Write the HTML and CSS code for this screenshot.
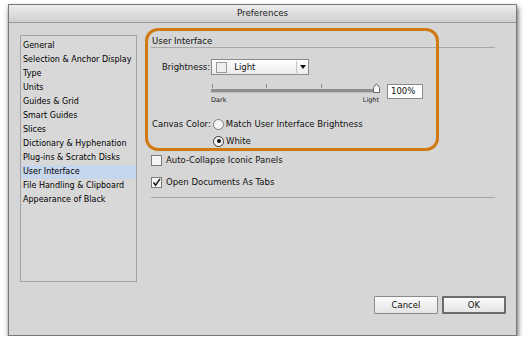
FILE: index.html
```html
<!DOCTYPE html>
<html lang="en">
<head>
    <meta charset="UTF-8">
    <title>Preferences</title>
    <link rel="stylesheet" href="styles.css">
</head>
<body>
    <div class="window">
        <div class="titlebar">Preferences</div>
        <div class="content">
            <ul class="sidebar">
                <li>General</li>
                <li>Selection &amp; Anchor Display</li>
                <li>Type</li>
                <li>Units</li>
                <li>Guides &amp; Grid</li>
                <li>Smart Guides</li>
                <li>Slices</li>
                <li>Dictionary &amp; Hyphenation</li>
                <li>Plug-ins &amp; Scratch Disks</li>
                <li class="selected">User Interface</li>
                <li>File Handling &amp; Clipboard</li>
                <li>Appearance of Black</li>
            </ul>
            <div class="panel">
                <div class="section-title">User Interface</div>

                <div class="row brightness-row">
                    <span class="label">Brightness:</span>
                    <div class="dropdown">
                        <span class="swatch"></span>
                        <span class="dropdown-text">Light</span>
                        <span class="dropdown-arrow">
                            <svg width="6" height="4" viewBox="0 0 6 4"><path d="M0 0 H6 L3 4 Z" fill="#111"/></svg>
                        </span>
                    </div>
                </div>

                <div class="slider-row">
                    <div class="slider">
                        <div class="ticks">
                            <span></span><span></span><span></span><span></span>
                        </div>
                        <div class="track">
                            <svg class="thumb" width="9" height="10" viewBox="0 0 9 10">
                                <path d="M1.5 9.5 V4.5 L4.5 0.8 L7.5 4.5 V9.5 Z" fill="#fafafa" stroke="#666"/>
                            </svg>
                        </div>
                        <div class="slider-labels">
                            <span>Dark</span>
                            <span>Light</span>
                        </div>
                    </div>
                    <div class="percent">100%</div>
                </div>

                <div class="row canvas-row">
                    <span class="label">Canvas Color:</span>
                    <span class="radio"></span>
                    <span>Match User Interface Brightness</span>
                </div>
                <div class="row white-row">
                    <span class="radio checked"></span>
                    <span>White</span>
                </div>

                <div class="row check-row">
                    <span class="checkbox"></span>
                    <span>Auto-Collapse Iconic Panels</span>
                </div>
                <div class="row check-row second">
                    <span class="checkbox">
                        <svg width="9" height="9" viewBox="0 0 9 9"><path d="M1.5 4.5 L3.6 7.2 L8 0.8" fill="none" stroke="#111" stroke-width="1.4"/></svg>
                    </span>
                    <span>Open Documents As Tabs</span>
                </div>

                <div class="divider"></div>

                <div class="buttons">
                    <button class="btn">Cancel</button>
                    <button class="btn default">OK</button>
                </div>
            </div>
        </div>
        <div class="highlight"></div>
    </div>
</body>
</html>
```

FILE: styles.css
```css
body {
    margin: 0;
    background: #fff;
    font-family: "DejaVu Sans", Verdana, sans-serif;
    font-size: 8.5px;
    color: #111;
}
.window {
    position: relative;
    margin: 4px 0 0 8px;
    width: 507px;
    height: 330px;
    border: 1px solid #7a7a7a;
    background: #d6d6d6;
    box-shadow: 1px 3px 5px rgba(0, 0, 0, 0.65);
    display: flex;
    flex-direction: column;
}
.titlebar {
    height: 17px;
    line-height: 17px;
    text-align: center;
    font-size: 8.7px;
    color: #222;
    background: linear-gradient(#ececec, #cfcfcf);
    border-bottom: 1px solid #9a9a9a;
}
.content {
    flex: 1;
    display: flex;
    padding: 12px 10px 21px 11px;
}
.sidebar {
    list-style: none;
    margin: 0;
    padding: 3px 0 0 0;
    width: 115px;
    height: 242px;
    border: 1px solid #a3a3a3;
    background: #d8d8d8;
    font-size: 8px;
    color: #000;
}
.sidebar li {
    height: 14px;
    line-height: 14px;
    padding-left: 2px;
    white-space: nowrap;
}
.sidebar li.selected {
    background: #c6d6ec;
}
.panel {
    flex: 1;
    margin-left: 14px;
    display: flex;
    flex-direction: column;
}
.section-title {
    height: 12px;
    line-height: 12px;
    padding-left: 1px;
    border-bottom: 1px solid #a8a8a8;
    margin-right: 11px;
}
.row {
    display: flex;
    align-items: center;
    white-space: nowrap;
    height: 14px;
}
.label {
    margin-right: 2px;
}
.brightness-row {
    margin-top: 11px;
    height: 16px;
    padding-left: 11px;
}
.brightness-row .label {
    margin-right: 1px;
}
.dropdown {
    width: 96px;
    height: 14px;
    border: 1px solid #8c8c8c;
    background: linear-gradient(#fdfdfd, #ececec);
    display: flex;
    align-items: center;
}
.swatch {
    width: 9px;
    height: 9px;
    border: 1px solid #9a9a9a;
    background: #eee;
    margin-left: 4px;
}
.dropdown-text {
    margin-left: 7px;
    flex: 1;
}
.dropdown-arrow {
    width: 11px;
    height: 12px;
    border-left: 1px solid #c4c4c4;
    display: flex;
    align-items: center;
    justify-content: center;
}
.slider-row {
    display: flex;
    margin-top: 9px;
    padding-left: 60px;
}
.slider {
    width: 168px;
}
.ticks {
    display: flex;
    justify-content: space-between;
    width: 164px;
    height: 4px;
    padding-left: 1px;
}
.ticks span {
    width: 1px;
    height: 4px;
    background: #8a8a8a;
}
.track {
    position: relative;
    margin-top: 1px;
    height: 3px;
    background: #8f8f8f;
    border-bottom: 1px solid #bdbdbd;
    border-radius: 1px;
}
.thumb {
    position: absolute;
    right: -2px;
    top: -6px;
}
.slider-labels {
    display: flex;
    justify-content: space-between;
    margin-top: 3px;
    font-size: 6.5px;
    line-height: 9px;
    color: #222;
}
.percent {
    margin: 0 0 0 8px;
    width: 31px;
    height: 13px;
    line-height: 13px;
    padding-left: 3px;
    border: 1px solid #8a8a8a;
    background: #fff;
}
.canvas-row {
    margin-top: 12px;
    padding-left: 1px;
}
.radio {
    width: 9px;
    height: 9px;
    border: 1px solid #7c7c7c;
    border-radius: 50%;
    background: #f5f5f5;
    margin-right: 2px;
    position: relative;
}
.radio.checked {
    border-color: #333;
}
.radio.checked::after {
    content: "";
    position: absolute;
    left: 2.5px;
    top: 2.5px;
    width: 4px;
    height: 4px;
    border-radius: 50%;
    background: #111;
}
.white-row {
    margin-top: 3px;
    padding-left: 62px;
}
.check-row {
    margin-top: 5px;
}
.check-row.second {
    margin-top: 8px;
}
.checkbox {
    width: 9px;
    height: 9px;
    border: 1px solid #7c7c7c;
    background: #f5f5f5;
    margin-right: 4px;
    display: flex;
}
.divider {
    margin-top: 8px;
    margin-right: 11px;
    height: 1px;
    background: #a8a8a8;
}
.buttons {
    margin-top: auto;
    display: flex;
    justify-content: flex-end;
    gap: 4px;
}
.btn {
    font-family: inherit;
    font-size: 8.5px;
    width: 64px;
    height: 18px;
    padding: 0;
    border: 1px solid #8a8a8a;
    border-radius: 1px;
    background: linear-gradient(#fbfbfb, #e4e4e4);
    color: #111;
}
.btn.default {
    border: 2px solid #6c6c6c;
}
.highlight {
    position: absolute;
    left: 136px;
    top: 23px;
    width: 288px;
    height: 117px;
    border: 3px solid #cf7a12;
    border-radius: 13px;
    pointer-events: none;
}
```
